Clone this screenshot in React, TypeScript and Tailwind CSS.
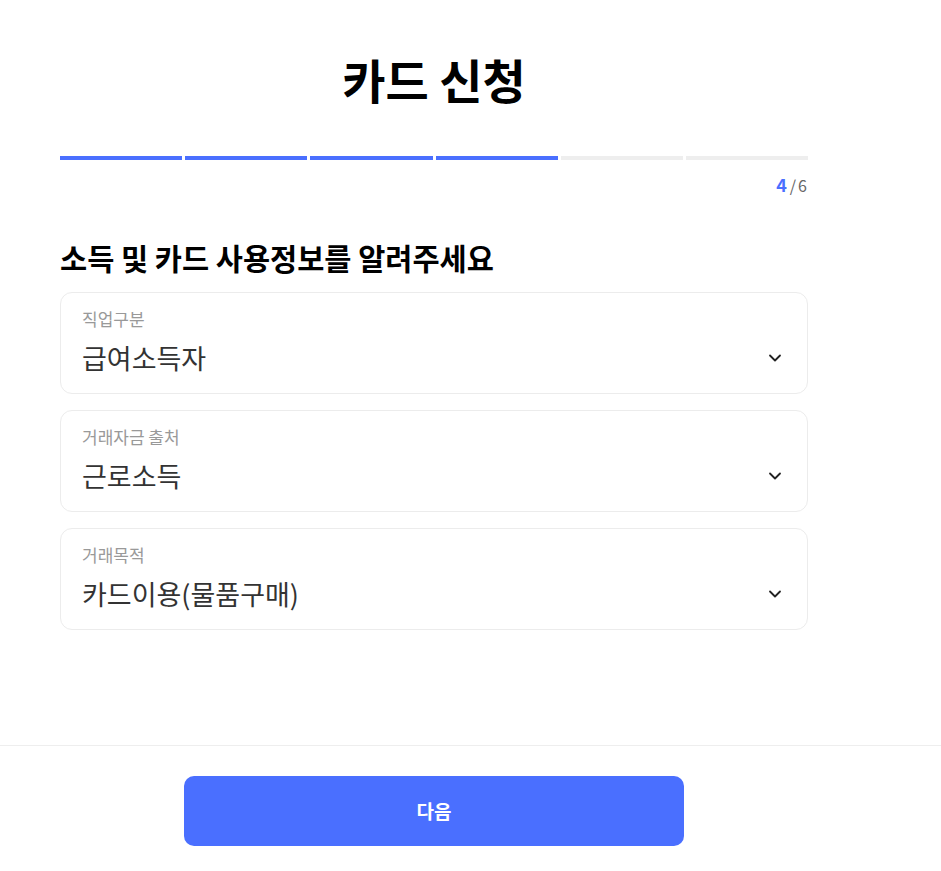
import React from 'react';
import { ChevronDown } from 'lucide-react';

interface SelectFieldProps {
  label: string;
  value: string;
}

const SelectField = ({ label, value }: SelectFieldProps) => (
  <div className="flex h-[102px] flex-col rounded-xl border border-[#ececec] bg-white pl-[21px] pr-[22px] pt-[15px]">
    <span className="text-[17px] leading-[22px] text-[#999999]">{label}</span>
    <div className="mt-[10px] flex items-center justify-between">
      <span className="text-[27px] leading-[36px] text-[#333333]">{value}</span>
      <ChevronDown size={20} strokeWidth={2.2} className="text-[#222222]" />
    </div>
  </div>
);

const steps = [1, 2, 3, 4, 5, 6];
const current = 4;

export default function App() {
  return (
    <div
      className="flex min-h-screen w-full flex-col bg-white"
      style={{ fontFamily: '"Noto Sans CJK KR", "Noto Sans", sans-serif' }}
    >
      <main className="flex-1 pl-[60px]">
        <div className="w-[748px]">
          <h1 className="pt-[49px] text-center text-[47px] font-bold leading-[60px] text-black">
            카드 신청
          </h1>
          <div className="mt-[47px] flex gap-[3px]">
            {steps.map((s) => (
              <div
                key={s}
                className={s <= current ? 'h-[4px] flex-1 bg-[#4a6fff]' : 'h-[4px] flex-1 bg-[#eeeeee]'}
              />
            ))}
          </div>
          <div className="mt-[14px] flex items-baseline justify-end pr-[1px]">
            <span className="text-[18px] font-bold leading-[20px] text-[#4a6fff]">4</span>
            <span className="ml-[3px] text-[16px] leading-[20px] text-[#666666]">/</span>
            <span className="ml-[2px] text-[16px] leading-[20px] text-[#666666]">6</span>
          </div>
          <h2 className="mt-[42px] text-[29.5px] font-bold leading-[40px] text-black">
            소득 및 카드 사용정보를 알려주세요
          </h2>
          <div className="mt-[15px] flex flex-col gap-[16px]">
            <SelectField label="직업구분" value="급여소득자" />
            <SelectField label="거래자금 출처" value="근로소득" />
            <SelectField label="거래목적" value="카드이용(물품구매)" />
          </div>
        </div>
      </main>
      <footer className="border-t border-[#eeeeee] pb-[25px] pt-[30px]">
        <div className="w-[868px]">
          <button className="ml-[184px] flex h-[70px] w-[500px] items-center justify-center rounded-[10px] bg-[#4a6fff] text-[19px] font-bold text-white">
            다음
          </button>
        </div>
      </footer>
    </div>
  );
}
